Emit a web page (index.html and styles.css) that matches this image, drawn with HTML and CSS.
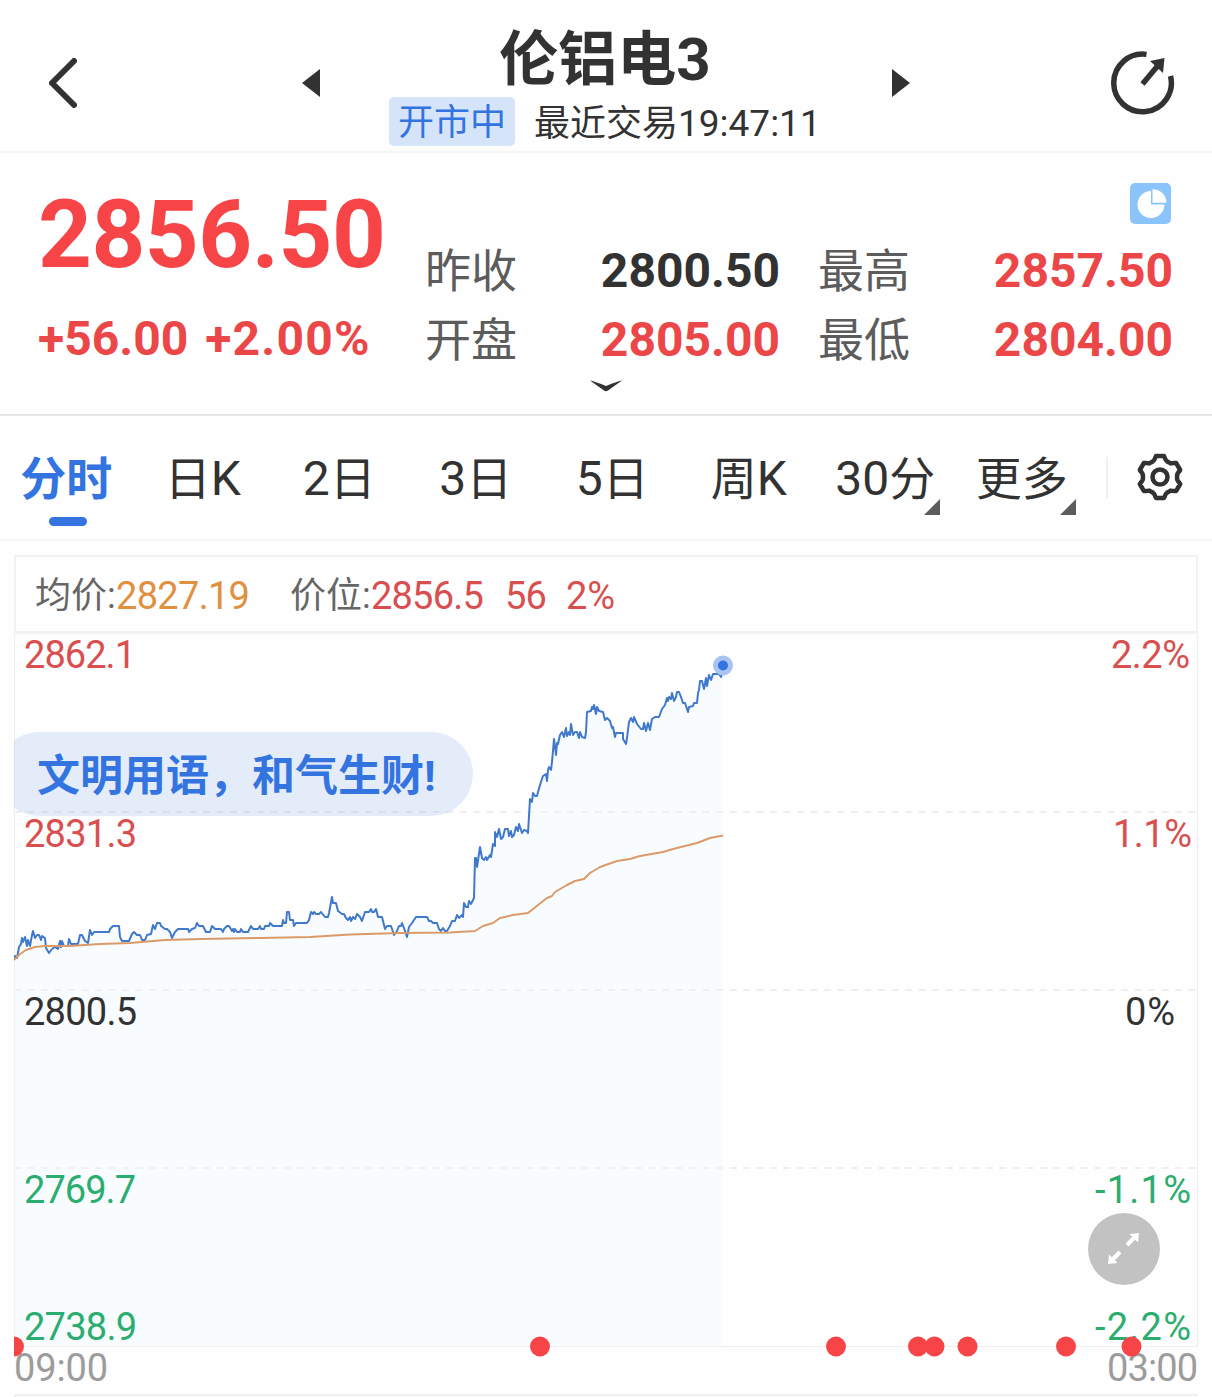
FILE: index.html
```html
<!DOCTYPE html>
<html lang="zh-CN">
<head>
    <meta charset="UTF-8">
    <meta name="viewport" content="width=device-width, initial-scale=1.0">
    <title>伦铝电3</title>
    <link rel="stylesheet" href="styles.css">
</head>
<body>
    <header class="header">
        <svg class="back" width="28" height="50" viewBox="0 0 28 50"><path d="M25 3 3 25l22 22"/></svg>
        <svg class="prev" width="18" height="28" viewBox="0 0 18 28"><path d="M18 0v28L0 14z"/></svg>
        <div class="title">
            <h1>伦铝电<span>3</span></h1>
            <div class="status">
                <span class="badge">开市中</span>
                <span class="last-trade">最近交易<span class="clock">19:47:11</span></span>
            </div>
        </div>
        <svg class="next" width="18" height="28" viewBox="0 0 18 28"><path d="M0 0v28l18-14z"/></svg>
        <svg class="share" width="64" height="64" viewBox="0 0 64 64">
            <path class="ring" d="M35.5 3.4A28.8 28.8 0 1 0 59.5 25"/>
            <path class="shaft" d="M31.5 33 49 12"/>
            <path class="tip" d="M53.5 7 39 10l13 12z"/>
        </svg>
    </header>

    <section class="quote">
        <div class="price-block">
            <div class="price">2856.50</div>
            <div class="change"><span>+56.00</span><span class="percent">+2.00%</span></div>
        </div>
        <dl class="stats">
            <dt>昨收</dt><dd class="flat">2800.50</dd>
            <dt>最高</dt><dd>2857.50</dd>
            <dt>开盘</dt><dd>2805.00</dd>
            <dt>最低</dt><dd>2804.00</dd>
        </dl>
        <svg class="pie" width="41" height="41" viewBox="0 0 41 41">
            <rect width="41" height="41" rx="5"/>
            <path d="M21 8A13.5 13.5 0 1 0 34.500 21.500H21z"/>
            <path d="M22.500 6.200A13.800 13.800 0 0 1 36.500 19.800H22.500z"/>
        </svg>
        <svg class="more" width="32" height="12" viewBox="0 0 32 12"><path d="M0 .5Q4 1 16 6 28 1 32 .5L18 10.500Q16 12 14 10.500z"/></svg>
    </section>

    <nav class="tabs">
        <a class="tab active">分时</a>
        <a class="tab">日<span>K</span></a>
        <a class="tab"><span>2</span>日</a>
        <a class="tab"><span>3</span>日</a>
        <a class="tab"><span>5</span>日</a>
        <a class="tab">周<span>K</span></a>
        <a class="tab dropdown"><span>30</span>分</a>
        <a class="tab dropdown">更多</a>
        <span class="divider"></span>
        <svg class="gear" width="50" height="50" viewBox="-25 -25 50 50">
            <path d="M-4-21H4Q6-16 6.500-16L10.600-13.600Q12-14 16.200-13.900L20.200-7Q17-3 17.100-2.400V2.400Q17 3 20.200 7L16.200 13.900Q12 14 10.600 13.600L6.500 16Q6 16 4 21H-4Q-6 16-6.500 16L-10.600 13.600Q-12 14-16.200 13.900L-20.200 7Q-17 3-17.100 2.400V-2.400Q-17-3-20.200-7L-16.200-13.900Q-12-14-10.600-13.600L-6.500-16Q-6-16-4-21z"/>
            <circle r="7.500"/>
        </svg>
    </nav>

    <main class="chart">
        <div class="legend">
            <span class="name">均价:</span><span class="avg">2827.19</span>
            <span class="name second">价位:</span><span class="now">2856.5</span><span class="now diff">56</span><span class="now">2%</span>
        </div>
        <svg class="plot" width="1184" height="763" viewBox="14 634 1184 763">
            <!-- frame and grid -->
            <path class="frame" d="M14.500 634V1346.500H1197.500V634"/>
            <path class="grid" d="M14 812H1197M14 990H1197M14 1168H1197"/>

            <path class="area" d="M14 1346V959L15 956 17 958 19 947 21 944 22 938 23 942 25 937 27 946 28 940 30 946 32 935 33 931 35 938 37 935 39 935 41 940 42 936 45 938 46 948 49 953 60 944 68 946 80 935 90 935 94 932 109 932 113 926 119 926 122 941 129 941 134 932 142 940 151 934 157 923 172 938 178 929 195 928 199 926 206 932 250 930 270 924 282 926 287 912 294 926 307 923 313 913 328 917 332 897 342 914 350 919 365 912 376 909 382 917 387 926 394 935 402 925 407 937 416 917 427 917 437 923 441 931 447 931 463 917 474 898 475 858 480 850 490 855 499 832 528 833 530 799 540 785 548 770 554 742 566 731 585 738 587 712 603 712 615 735 623 733 626 744 634 718 650 729 659 717 671 698 679 692 688 712 697 703 702 681 713 674 721 677 723 666V1346z"/>
            <polyline class="price-line" points="14,959 15,956 17,958 19,947 21,944 22,938 23,942 25,937 27,946 28,940 30,946 32,935 33,931 35,938 37,935 39,935 41,940 42,936 45,938 46,948 49,953 52,949 55,947 58,949 60,941 61,947 62,941 64,946 68,946 69,939 71,944 78,944 80,935 82,935 85,941 88,943 90,930 92,935 94,932 109,932 110,929 113,926 119,926 120,937 122,941 129,941 132,934 134,932 137,935 140,935 142,940 145,940 147,935 151,934 153,925 155,929 157,923 160,923 161,926 165,929 167,929 170,932 172,938 175,932 178,929 188,929 189,932 192,929 195,928 197,923 199,926 203,926 206,932 210,932 212,926 215,929 221,929 223,932 224,929 227,926 229,926 232,931 233,929 234,932 235,929 237,932 240,932 241,929 243,932 248,932 251,926 253,929 258,929 260,926 261,929 264,929 265,926 269,926 270,923 273,926 282,926 283,920 284,923 286,923 287,912 289,912 290,920 293,920 294,926 296,923 307,923 309,920 311,912 313,914 314,912 316,914 319,914 321,912 325,917 328,917 329,913 332,897 333,903 336,903 338,911 342,914 344,914 346,918 348,920 350,917 351,921 353,917 355,919 357,914 360,917 362,921 365,912 369,912 371,909 372,912 374,912 376,909 378,917 382,917 385,929 387,926 391,926 394,935 397,931 399,926 401,926 402,923 404,928 407,937 409,927 412,923 416,917 427,917 429,921 431,921 433,923 437,923 439,929 441,931 443,928 445,931 447,931 450,926 452,921 455,921 457,915 459,918 462,915 463,917 464,903 466,907 468,907 469,901 471,904 474,898 475,858 476,858 477,867 480,847 482,858 484,860 486,857 487,860 490,855 491,857 493,844 495,846 495,832 497,837 499,829 501,839 503,837 505,829 508,829 509,836 511,831 512,837 514,835 516,827 518,831 519,824 522,833 524,830 527,831 528,833 530,799 532,802 533,793 535,796 537,796 540,785 543,776 546,774 547,781 548,770 549,767 551,770 552,762 554,739 556,755 557,743 558,744 560,735 562,732 564,737 566,728 567,736 569,732 570,735 571,724 573,735 575,732 577,732 579,738 580,732 582,737 585,738 586,732 587,712 591,711 592,707 593,709 594,705 596,714 597,707 599,711 603,712 605,720 607,718 610,721 612,728 613,727 615,737 616,733 623,733 623,739 626,744 627,738 629,722 631,718 633,722 634,717 637,724 641,729 643,729 644,723 646,731 648,723 650,730 652,719 655,717 659,717 662,709 665,705 667,698 668,701 669,697 671,699 672,693 674,701 676,697 677,692 679,692 681,697 683,703 685,703 688,712 689,707 693,706 694,703 697,703 698,693 699,690 700,681 702,681 704,689 706,678 707,686 709,675 711,680 713,674 719,674 721,677 723,666"/>
            <polyline class="avg-line" points="14,960 20,954 26,950 35,947 45,946 70,946 100,944 130,943 165,940 200,939 260,938 310,937 350,934.500 400,933 450,932.500 475,931 483,926 493,923 500,918 513,915 528,913 538,905 547,898 552,896 555,892 567,885 575,881 584,879 590,873 600,867 617,861 630,859 640,856 663,852 673,849 697,843 710,838 723,835.500"/>
            <circle class="halo" cx="723" cy="665.500" r="10"/>
            <circle class="dot" cx="723" cy="665.500" r="5"/>

            <!-- notice -->
            <rect class="notice" x="-3" y="732" width="476" height="84" rx="42"/>
            <text class="notice-text" x="37" y="791">文明用语，和气生财!</text>

            <!-- price and percent scales -->
            <g class="scale">
                <text class="up" x="24" y="668" textLength="112">2862.1</text>
                <text class="up" x="24" y="847" textLength="113">2831.3</text>
                <text x="24" y="1025" textLength="113">2800.5</text>
                <text class="down" x="24" y="1203" textLength="112">2769.7</text>
                <text class="down" x="24" y="1340" textLength="113">2738.9</text>
                <text class="up" x="1111" y="668" textLength="79">2.2%</text>
                <text class="up" x="1113" y="847" textLength="79">1.1%</text>
                <text x="1125" y="1025" textLength="50">0%</text>
                <text class="down" x="1095" y="1203" textLength="96">-1.1%</text>
                <text class="down" x="1095" y="1340" textLength="96">-2.2%</text>
                <text class="time" x="14" y="1381" textLength="94">09:00</text>
                <text class="time" x="1107" y="1381" textLength="91">03:00</text>
            </g>

            <g class="events">
                <circle cx="14" cy="1346.500" r="10"/>
                <circle cx="540" cy="1346.500" r="10"/>
                <circle cx="836" cy="1346.500" r="10"/>
                <circle cx="918" cy="1346.500" r="10"/>
                <circle cx="934.500" cy="1346.500" r="10"/>
                <circle cx="967.500" cy="1346.500" r="10"/>
                <circle cx="1066" cy="1346.500" r="10"/>
                <circle cx="1131.500" cy="1346.500" r="10"/>
            </g>

            <!-- full screen button -->
            <circle class="expand" cx="1124" cy="1249" r="36"/>
            <path class="expand-shaft" d="M1127 1245l8-8M1120 1252l-8 8"/>
            <path class="expand-tip" d="M1139 1233l-9.500 1 8.500 8.500zM1108 1264l1-9.500 8.500 8.500z"/>

            <path class="next-panel" d="M15 1397V1395H1198"/>
        </svg>
    </main>
</body>
</html>
```
FILE: styles.css
```css
* {
    box-sizing: border-box;
}
body {
    margin: 0;
    background-color: #fefefe;
    color: #323232;
    font-family: Roboto, "Noto Sans CJK SC", sans-serif;
    overflow: hidden;
}
svg {
    display: block;
}

/* Header */
.header {
    display: grid;
    grid-template-columns: 302px 18px 572px 18px 201px 64px;
    height: 153px;
    padding-top: 14px;
    align-items: center;
    border-bottom: 2px solid #f5f5f5;
    fill: #323232;
}
.back {
    margin-left: 49px;
    fill: none;
    stroke: #323232;
    stroke-width: 6;
    stroke-linecap: round;
    stroke-linejoin: round;
}
.share {
    grid-column: 6;
}
.ring,
.shaft {
    fill: none;
    stroke: #323232;
    stroke-width: 5.5;
}
.title {
    align-self: start;
    text-align: center;
}
.title h1 {
    margin: 0;
    height: 83px;
    padding-right: 2px;
    font-size: 59px;
    line-height: 91px;
    font-weight: 700;
}
.title h1 span {
    font-size: 60px;
}
.status {
    display: flex;
    margin-left: 69px;
    gap: 19px;
    font-size: 36px;
    line-height: 53px;
}
.badge {
    width: 126px;
    height: 49px;
    border-radius: 5px;
    background-color: #d6e4fa;
    color: #3374e0;
}
.clock {
    font-size: 37px;
}

/* Quote */
.quote {
    position: relative;
    display: flex;
    height: 263px;
    border-bottom: 2px solid #e6e6e6;
}
.price-block {
    width: 425px;
    padding-left: 38px;
    color: #ec4748;
    font-weight: 700;
}
.price {
    margin-top: 27px;
    height: 110px;
    font-size: 94px;
    line-height: 110px;
    letter-spacing: -0.5px;
    color: #f74447;
}
.change {
    display: flex;
    gap: 17px;
    margin-top: 14px;
    font-size: 48px;
    line-height: 70px;
}
.percent {
    letter-spacing: 1.2px;
}
.stats {
    display: grid;
    grid-template-columns: 133px 222px 38px 133px 222px;
    grid-auto-rows: 69px;
    margin: 84px 0 0;
    width: 750px;
    line-height: 69px;
}
.stats dt {
    font-size: 46px;
    color: #5c5c5c;
}
.stats dt:nth-of-type(even) {
    grid-column: 4;
}
.stats dd {
    margin: -1px 0 0;
    text-align: right;
    font-size: 48px;
    font-weight: 700;
    color: #ec4748;
}
.stats .flat {
    color: #323232;
}
.pie {
    position: absolute;
    top: 30px;
    left: 1130px;
    fill: #fff;
}
.pie rect {
    fill: #8ac4fa;
}
.more {
    position: absolute;
    top: 227px;
    left: 590px;
    fill: #323232;
}

/* Tabs */
.tabs {
    display: flex;
    height: 125px;
    border-bottom: 2px solid #f6f6f6;
}
.tab {
    position: relative;
    width: 136.5px;
    font-size: 46px;
    line-height: 126px;
    text-align: center;
}
.tab span {
    font-size: 48px;
}
.tab:first-child {
    margin-left: -2px;
}
.tab.active {
    color: #3374e0;
    font-weight: 700;
}
.tab.active::after {
    content: "";
    position: absolute;
    top: 101px;
    left: 51px;
    width: 38px;
    height: 9px;
    border-radius: 5px;
    background-color: #3374e0;
}
.tab.dropdown::after {
    content: "";
    position: absolute;
    top: 83px;
    right: 14px;
    border-left: 16px solid transparent;
    border-bottom: 16px solid #5c5c5c;
}
.divider {
    width: 2px;
    height: 41px;
    margin: 41px 27px 0 16px;
    background-color: #f0f0f0;
}
.gear {
    margin-top: 36px;
    fill: none;
    stroke: #323232;
    stroke-width: 4.5;
    stroke-linejoin: round;
}

/* Chart */
.chart {
    margin: 14px 14px 0;
}
.legend {
    display: flex;
    height: 79px;
    padding-left: 19px;
    border: 2px solid #f2f2f2;
    border-bottom-width: 3px;
    font-size: 38px;
    line-height: 78px;
}
.name {
    width: 81px;
    font-size: 36px;
    color: #666;
}
.name.second {
    margin-left: 38px;
}
.avg {
    width: 136px;
    letter-spacing: -0.7px;
    color: #e0913f;
}
.now {
    width: 134px;
    letter-spacing: -0.8px;
    color: #d94f50;
}
.now.diff {
    width: 61px;
}
.now:last-child {
    letter-spacing: 0;
}
.frame,
.grid,
.next-panel {
    fill: none;
    stroke: #efefef;
}
.grid {
    stroke-width: 2;
    stroke-dasharray: 7 6.5;
}
.area {
    fill: #e8f6ff;
    fill-opacity: 0.27;
}
.next-panel {
    stroke-width: 2;
}
.price-line,
.avg-line {
    fill: none;
    stroke: #4079cb;
    stroke-width: 2;
    stroke-linejoin: round;
}
.avg-line {
    stroke: #dc9a68;
}
.halo {
    fill: #a9c4f2;
}
.dot {
    fill: #3374e0;
}
.notice {
    fill: #3374e0;
    fill-opacity: 0.13;
}
.notice-text {
    fill: #3374e0;
    font-size: 43px;
    font-weight: 700;
}
.scale {
    fill: #323232;
    font-size: 38px;
}
.scale .up {
    fill: #d94f50;
}
.scale .down {
    fill: #2bad70;
}
.scale .time {
    fill: #9c9c9c;
}
.events {
    fill: #f74447;
}
.expand {
    fill: #c2c2c2;
}
.expand-shaft {
    stroke: #fff;
    stroke-width: 4;
}
.expand-tip {
    fill: #fff;
}
```
